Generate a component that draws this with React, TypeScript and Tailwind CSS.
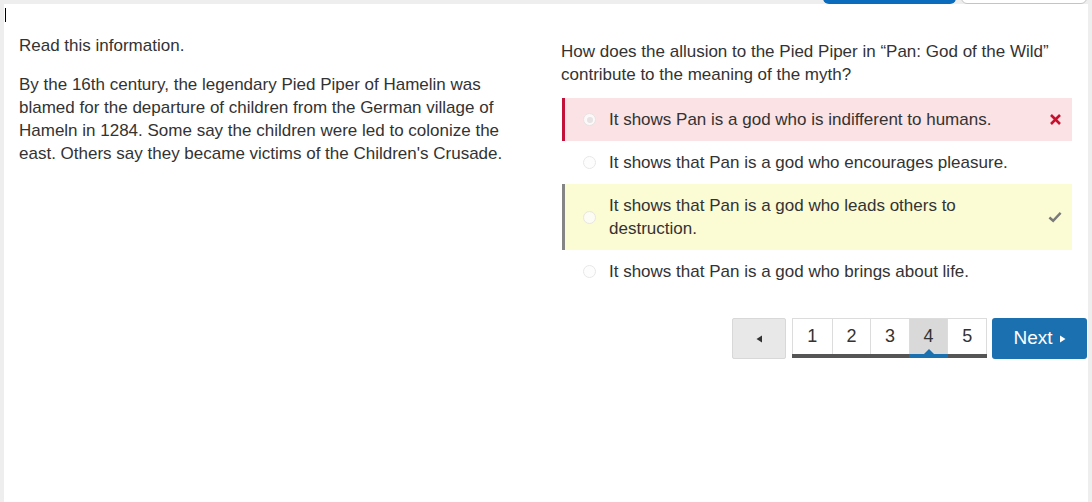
import React from "react";

const font = { fontFamily: '"Liberation Sans", Arial, sans-serif' };

function Radio({ checked }: { checked?: boolean }) {
  return (
    <span className="flex h-[13px] w-[13px] shrink-0 items-center justify-center rounded-full border border-[#e2e2e2] bg-[#fdfdfd] opacity-80">
      {checked ? <span className="h-[6px] w-[6px] rounded-full bg-[#e3e3e3]" /> : null}
    </span>
  );
}

type Opt = { text: string; kind: "wrong" | "right" | "none"; checked?: boolean };

const options: Opt[] = [
  { text: "It shows Pan is a god who is indifferent to humans.", kind: "wrong", checked: true },
  { text: "It shows that Pan is a god who encourages pleasure.", kind: "none" },
  { text: "It shows that Pan is a god who leads others to destruction.", kind: "right" },
  { text: "It shows that Pan is a god who brings about life.", kind: "none" },
];

function Option({ o }: { o: Opt }) {
  const box =
    o.kind === "wrong"
      ? "bg-[#fbe2e4] border-[#c2123a]"
      : o.kind === "right"
      ? "bg-[#fbfbd4] border-[#858585]"
      : "bg-white border-transparent";
  return (
    <div className={`flex items-center border-l-[3px] py-[10px] pl-[18px] pr-[10px] ${box}`}>
      <Radio checked={o.checked} />
      <div className="ml-[13px] mr-[20px] flex-1 text-[17px] leading-[23px] text-[#333]">{o.text}</div>
      <div className="flex w-[14px] shrink-0 items-center justify-center">
        {o.kind === "wrong" ? (
          <svg width="13" height="13" viewBox="0 0 13 13">
            <path d="M2 2 L11 11 M11 2 L2 11" stroke="#c8102e" strokeWidth="2.6" strokeLinecap="butt" />
          </svg>
        ) : o.kind === "right" ? (
          <svg width="15" height="12" viewBox="0 0 15 12">
            <path d="M1.5 6.5 L5.5 10 L13.5 1.5" stroke="#7a7a7a" strokeWidth="2.6" fill="none" />
          </svg>
        ) : null}
      </div>
    </div>
  );
}

export default function App() {
  return (
    <div className="relative h-[502px] w-[1092px] overflow-hidden bg-[#eeeeee]" style={font}>
      {/* top toolbar remnants */}
      <div className="flex h-[4px] items-end justify-end overflow-hidden pr-[5px]">
        <div className="h-[30px] w-[133px] rounded-b-[6px] bg-[#0b6cbd]" />
        <div className="ml-[5px] h-[30px] w-[126px] rounded-b-[6px] border border-[#c4c4c4] bg-white" />
      </div>
      <div className="relative mx-[4px] h-[498px] bg-white">
        <div className="absolute left-[1px] top-[4px] h-[14px] w-[1px] bg-black" />
        <div className="flex pl-[15px] pr-[16px]">
          <div className="w-[512px] pt-[30px] text-[17px] leading-[23px] text-[#333]">
            <p>Read this information.</p>
            <p className="mt-[16px] w-[500px]">
              By the 16th century, the legendary Pied Piper of Hamelin was blamed for the departure of children from
              the German village of Hameln in 1284. Some say the children were led to colonize the east. Others say
              they became victims of the Children's Crusade.
            </p>
          </div>
          <div className="ml-[30px] flex-1 pt-[36px]">
            <p className="text-[17px] leading-[23px] text-[#333]">
              How does the allusion to the Pied Piper in “Pan: God of the Wild” contribute to the meaning of the myth?
            </p>
            <div className="mt-[12px] ml-[1px] flex flex-col">
              {options.map((o, i) => (
                <Option key={i} o={o} />
              ))}
            </div>
          </div>
        </div>
        <div className="mt-[25px] flex justify-end pr-[1px]">
          <button className="flex h-[41px] w-[54px] items-center justify-center rounded-[2px] border border-[#d8d8d8] bg-[#e8e8e8]">
            <svg width="7" height="8" viewBox="0 0 7 8">
              <path d="M6 0.5 L0.5 4 L6 7.5 Z" fill="#333" />
            </svg>
          </button>
          <div className="ml-[6px] flex h-[40px] w-[195px] flex-col">
            <div className="flex h-[36px] border-x border-t border-[#dcdcdc] bg-white">
              {[1, 2, 3, 4, 5].map((n) => (
                <div
                  key={n}
                  className={`relative flex w-[38.6px] items-center justify-center text-[18px] text-[#333] ${
                    n > 1 ? "border-l border-[#dcdcdc]" : ""
                  } ${n === 4 ? "bg-[#d9d9d9]" : ""}`}
                >
                  {n}
                  {n === 4 ? (
                    <span className="absolute bottom-0 left-1/2 h-0 w-0 -translate-x-1/2 border-x-[5px] border-b-[5px] border-x-transparent border-b-[#1b70b0]" />
                  ) : null}
                </div>
              ))}
            </div>
            <div className="flex h-[4px]">
              <div className="w-[117px] bg-[#555]" />
              <div className="w-[39px] bg-[#1b70b0]" />
              <div className="w-[39px] bg-[#555]" />
            </div>
          </div>
          <button className="ml-[5px] flex h-[41px] w-[95px] items-center justify-center rounded-[3px] bg-[#1b70b0] text-[19px] text-white">
            Next
            <svg className="ml-[6px]" width="7" height="8" viewBox="0 0 7 8">
              <path d="M1 0.5 L6.5 4 L1 7.5 Z" fill="#fff" />
            </svg>
          </button>
        </div>
      </div>
    </div>
  );
}
